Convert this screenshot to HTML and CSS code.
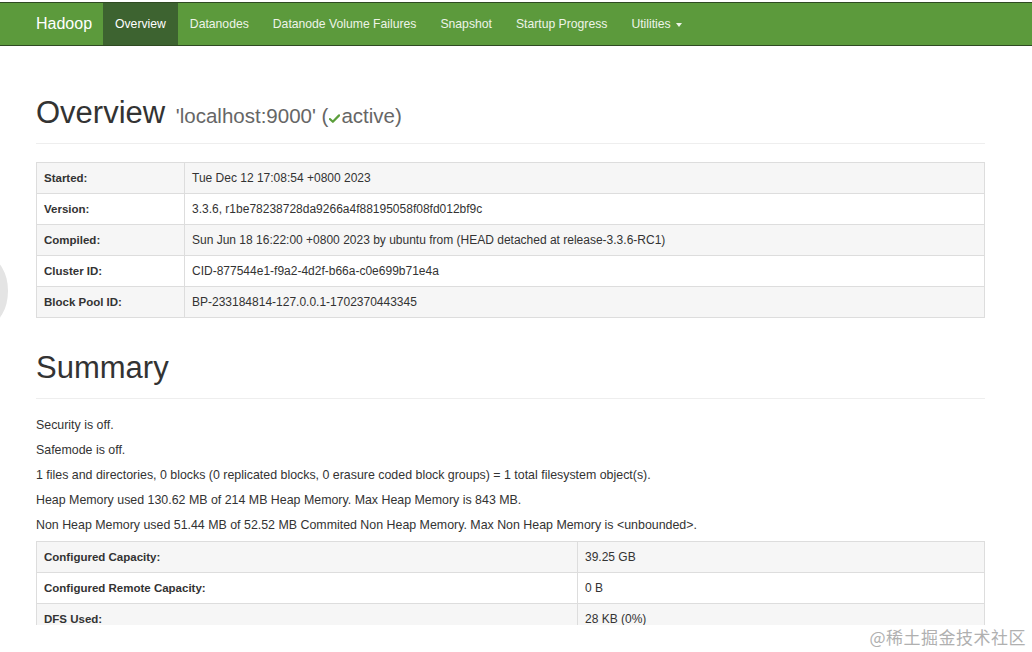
FILE: index.html
```html
<!DOCTYPE html>
<html lang="en">
<head>
  <meta charset="UTF-8">
  <title>Namenode information</title>
  <link rel="stylesheet" href="styles.css">
</head>
<body>
  <div class="navbar">
    <a class="brand" href="#">Hadoop</a>
    <ul class="nav">
      <li class="active"><a href="#">Overview</a></li>
      <li><a href="#">Datanodes</a></li>
      <li><a href="#">Datanode Volume Failures</a></li>
      <li><a href="#">Snapshot</a></li>
      <li><a href="#">Startup Progress</a></li>
      <li><a href="#">Utilities <span class="caret"></span></a></li>
    </ul>
  </div>

  <div class="container">
    <div class="page-header">
      <h1>Overview <small>'localhost:9000' (<svg class="ok" viewBox="0 0 12 12" width="11" height="11"><path d="M1 6.6 L4.2 9.6 L11 2.6" fill="none" stroke="#5a9e3a" stroke-width="2.4" stroke-linecap="round" stroke-linejoin="round"/></svg>active)</small></h1>
    </div>

    <table class="table overview">
      <tr><th>Started:</th><td>Tue Dec 12 17:08:54 +0800 2023</td></tr>
      <tr><th>Version:</th><td>3.3.6, r1be78238728da9266a4f88195058f08fd012bf9c</td></tr>
      <tr><th>Compiled:</th><td>Sun Jun 18 16:22:00 +0800 2023 by ubuntu from (HEAD detached at release-3.3.6-RC1)</td></tr>
      <tr><th>Cluster ID:</th><td>CID-877544e1-f9a2-4d2f-b66a-c0e699b71e4a</td></tr>
      <tr><th>Block Pool ID:</th><td>BP-233184814-127.0.0.1-1702370443345</td></tr>
    </table>

    <div class="page-header summary-header">
      <h1>Summary</h1>
    </div>

    <p>Security is off.</p>
    <p>Safemode is off.</p>
    <p>1 files and directories, 0 blocks (0 replicated blocks, 0 erasure coded block groups) = 1 total filesystem object(s).</p>
    <p>Heap Memory used 130.62 MB of 214 MB Heap Memory. Max Heap Memory is 843 MB.</p>
    <p class="last">Non Heap Memory used 51.44 MB of 52.52 MB Commited Non Heap Memory. Max Non Heap Memory is &lt;unbounded&gt;.</p>

    <table class="table summary">
      <tr><th>Configured Capacity:</th><td>39.25 GB</td></tr>
      <tr><th>Configured Remote Capacity:</th><td>0 B</td></tr>
      <tr><th>DFS Used:</th><td>28 KB (0%)</td></tr>
    </table>
  </div>

  <div class="edge-blob"></div>
  <div class="watermark">@稀土掘金技术社区</div>
</body>
</html>
```

FILE: styles.css
```css
html, body {
  margin: 0;
  padding: 0;
  background-color: #fff;
  height: 652px;
  overflow: hidden;
}
body {
  font-family: "Liberation Sans", Arial, sans-serif;
  font-size: 12px;
  color: #333;
  position: relative;
}
.navbar {
  margin-top: 2px;
  height: 42px;
  background-color: #5c9a3c;
  border-top: 1px solid #2f4a22;
  border-bottom: 1px solid #2f4a22;
  display: flex;
  align-items: stretch;
  padding-left: 36px;
}
.brand {
  color: #fff;
  font-size: 16px;
  text-decoration: none;
  display: flex;
  align-items: center;
  margin-right: 11px;
}
.nav {
  list-style: none;
  margin: 0;
  padding: 0;
  display: flex;
}
.nav li a {
  display: flex;
  align-items: center;
  height: 100%;
  padding: 0 12px;
  color: #eef4e8;
  text-decoration: none;
  font-size: 12.2px;
}
.nav li.active a {
  background-color: #3d6330;
  color: #fff;
}
.caret {
  display: inline-block;
  width: 0;
  height: 0;
  margin-left: 5px;
  margin-top: 2px;
  border-top: 4px solid #eef4e8;
  border-left: 3px solid transparent;
  border-right: 3px solid transparent;
}
.container {
  margin: 0 47px 0 36px;
  height: 579px;
  overflow: hidden;
}
.page-header {
  margin: 50px 0 18px;
  padding-bottom: 13px;
  border-bottom: 1px solid #eee;
}
.page-header h1 {
  margin: 0;
  height: 34px;
  font-size: 31px;
  font-weight: normal;
  line-height: 34px;
  color: #333;
  font-family: "Liberation Sans", Arial, sans-serif;
}
.page-header h1 small {
  font-size: 20.5px;
  line-height: 1;
  color: #666;
  margin-left: 2px;
}
.ok {
  vertical-align: -1px;
  margin: 0 1px;
}
.summary-header {
  margin-top: 33px;
  margin-bottom: 19px;
}
p {
  margin: 0 0 10px;
  line-height: 15px;
  font-size: 12.4px;
}
p.last {
  margin-bottom: 8px;
}
.table {
  width: 100%;
  border-collapse: collapse;
  border: 1px solid #ddd;
}
.table th, .table td {
  text-align: left;
  padding: 8px 7px;
  line-height: 14px;
  border: 1px solid #ddd;
  font-size: 12px;
}
.table th {
  font-weight: bold;
  font-size: 11.5px;
  color: #333;
}
.table td {
  color: #333;
}
.table tr:nth-child(odd) {
  background-color: #f6f6f6;
}
.overview th {
  width: 133px;
}
.summary th {
  width: 526px;
}
.edge-blob {
  position: absolute;
  left: -32px;
  top: 258px;
  width: 40px;
  height: 66px;
  border-radius: 50%;
  background-color: #e4e4e4;
}
.watermark {
  position: absolute;
  right: 6px;
  top: 624px;
  font-family: "Noto Sans CJK SC", sans-serif;
  font-size: 17px;
  color: #b0b0b0;
  letter-spacing: 0.5px;
}
```
